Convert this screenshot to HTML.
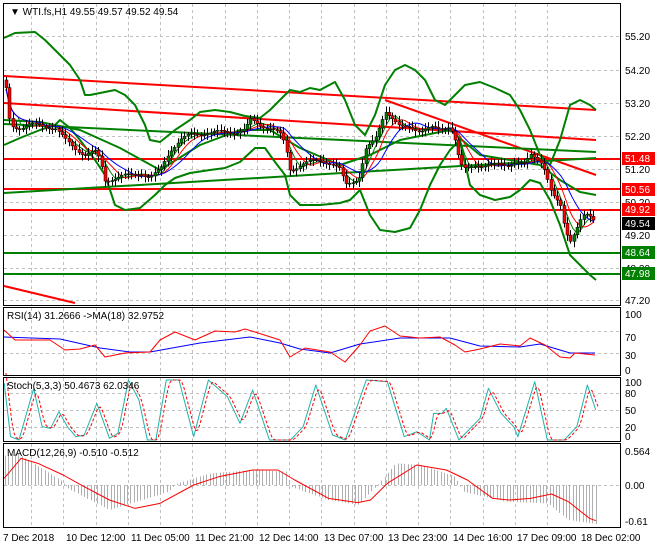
<!DOCTYPE html>
<html><head><meta charset="utf-8"><style>
html,body{margin:0;padding:0;background:#fff;}
svg{display:block;font-family:"Liberation Sans",Tahoma,sans-serif;}
</style></head><body>
<svg id="s" width="660" height="550" xmlns="http://www.w3.org/2000/svg">
<rect width="660" height="550" fill="#fff"/>
<g id="grid" stroke="#c0c0c0" stroke-dasharray="3,3" stroke-width="1"></g>
<g id="draw"></g>
<g stroke="#000" fill="none" stroke-width="1">
<rect x="3.5" y="3.5" width="617" height="302"/>
<rect x="3.5" y="307.5" width="617" height="68"/>
<rect x="3.5" y="377.5" width="617" height="64"/>
<rect x="3.5" y="443.5" width="617" height="84"/>
</g>
<g font-size="10" fill="#000">
<text x="625" y="40">55.20</text><text x="625" y="74">54.20</text><text x="625" y="107">53.20</text>
<text x="625" y="140">52.20</text><text x="625" y="173">51.20</text><text x="625" y="206">50.20</text>
<text x="625" y="239">49.20</text><text x="625" y="272">48.20</text><text x="625" y="304">47.20</text>
<text x="625" y="318">100</text><text x="625" y="341">70</text><text x="625" y="359">30</text><text x="625" y="374">0</text>
<text x="625" y="386">100</text><text x="625" y="397">80</text><text x="625" y="414">50</text><text x="625" y="431">20</text><text x="625" y="440">0</text>
<text x="625" y="455">0.564</text><text x="625" y="489">0.00</text><text x="625" y="525">-0.61</text>
</g>
<g font-size="10">
<rect x="622" y="152" width="33" height="13" fill="#f00"/><text x="625" y="162" fill="#fff">51.48</text>
<rect x="622" y="183" width="33" height="13" fill="#f00"/><text x="625" y="193" fill="#fff">50.56</text>
<rect x="622" y="203" width="33" height="13" fill="#f00"/><text x="625" y="213" fill="#fff">49.92</text>
<rect x="622" y="217" width="33" height="13" fill="#000"/><text x="625" y="227" fill="#fff">49.54</text>
<rect x="622" y="246" width="33" height="13" fill="#008000"/><text x="625" y="256" fill="#fff">48.64</text>
<rect x="622" y="267" width="33" height="13" fill="#008000"/><text x="625" y="277" fill="#fff">47.98</text>
</g>
<g font-size="10" fill="#000">
<text x="10" y="15">▼  WTI.fs,H1  49.55 49.57 49.52 49.54</text>
<text x="7" y="319">RSI(14) 31.2666  -&gt;MA(18) 32.9752</text>
<text x="7" y="389">Stoch(5,3,3) 50.4673 62.0346</text>
<text x="7" y="456">MACD(12,26,9) -0.510 -0.512</text>
<text x="3" y="541">7 Dec 2018</text><text x="66" y="541">10 Dec 12:00</text><text x="131" y="541">11 Dec 05:00</text>
<text x="195" y="541">11 Dec 21:00</text><text x="259" y="541">12 Dec 14:00</text><text x="324" y="541">13 Dec 07:00</text>
<text x="388" y="541">13 Dec 23:00</text><text x="453" y="541">14 Dec 16:00</text><text x="517" y="541">17 Dec 09:00</text>
<text x="581" y="541">18 Dec 02:00</text>
</g>
</svg>
<script>
var NS="http://www.w3.org/2000/svg";
function el(p,t,a){var e=document.createElementNS(NS,t);for(var k in a)e.setAttribute(k,a[k]);p.appendChild(e);return e;}
var G=document.getElementById('grid'),D=document.getElementById('draw');
var panels=[[4,305],[308,375],[378,441],[444,527]];
for(var x=547;x>4;x-=32.25){panels.forEach(function(p){el(G,'line',{x1:Math.round(x)+.5,x2:Math.round(x)+.5,y1:p[0],y2:p[1]});});}
[36,70,103,136,169,202,235,268,300,331,353,393,410,427,485].forEach(function(y){el(G,'line',{x1:4,x2:620,y1:y+.5,y2:y+.5});});
function interp(P,x){for(var i=1;i<P.length;i++){if(x<=P[i][0]){var a=P[i-1],b=P[i];return a[1]+(b[1]-a[1])*(x-a[0])/(b[0]-a[0]);}}return P[P.length-1][1];}
function pl(P,c,w,extra){var a={points:P.map(function(p){return p[0]+','+p[1]}).join(' '),fill:'none',stroke:c,'stroke-width':w,'stroke-linejoin':'round'};for(var k in extra)a[k]=extra[k];el(D,'polyline',a);}
function sc(P,sx){return P.map(function(p){return [p[0]/sx,300+p[1]/3];});}
// horizontal levels
[[159,'#f00'],[189,'#f00'],[210,'#f00']].forEach(function(l){el(D,'line',{x1:4,x2:620,y1:l[0],y2:l[0],stroke:l[1],'stroke-width':2});});
[[253,'#008000'],[274,'#008000']].forEach(function(l){el(D,'line',{x1:4,x2:620,y1:l[0],y2:l[0],stroke:l[1],'stroke-width':2});});
// trend lines
pl([[4,76],[596,110]],'#f00',2);pl([[4,103],[596,140]],'#f00',2);pl([[385,100],[596,175]],'#f00',2);pl([[4,286],[75,303]],'#f00',2);
pl([[4,124],[596,152]],'#008000',2);pl([[4,193],[596,158]],'#008000',2);
// bollinger
var up=[[4,38],[15,33],[35,32],[45,40],[60,55],[70,65],[80,80],[85,95],[90,95],[105,92],[115,90],[125,95],[135,105],[145,125],[150,140],[160,142],[175,130],[190,120],[200,112],[215,110],[230,112],[245,116],[260,118],[270,110],[280,100],[290,90],[300,92],[310,88],[320,90],[335,82],[345,100],[355,125],[365,135],[375,115],[385,85],[395,70],[405,65],[415,70],[425,80],[435,100],[445,105],[455,95],[465,85],[480,82],[495,88],[510,95],[520,110],[530,130],[540,155],[550,165],[560,140],[570,105],[580,100],[590,105],[596,110]];
var lo=[[4,145],[20,138],[40,130],[55,125],[60,120],[70,128],[80,140],[95,160],[105,175],[115,205],[125,210],[140,208],[155,195],[165,185],[175,178],[190,173],[210,170],[225,168],[240,162],[255,148],[265,148],[275,162],[285,175],[290,195],[300,205],[320,205],[340,203],[350,200],[360,190],[370,215],[380,230],[395,232],[410,228],[420,210],[430,185],[440,165],[450,150],[460,140],[470,185],[480,195],[495,200],[510,197],[520,190],[530,180],[540,183],[550,200],[560,225],[570,255],[580,265],[590,275],[596,280]];
var mid=[[4,120],[40,122],[80,130],[120,148],[160,170],[200,145],[240,130],[270,130],[300,148],[340,165],[370,155],[400,140],[450,130],[480,155],[510,160],[540,165],[560,180],[580,192],[596,195]];
pl(up,'#008000',2);pl(lo,'#008000',2);pl(mid,'#008000',2);
var cl=[[5,80],[10,125],[20,128],[30,125],[40,125],[55,128],[65,140],[75,148],[85,155],[95,152],[100,160],[105,180],[115,178],[125,176],[140,173],[150,178],[160,170],[170,150],[180,140],[190,135],[200,133],[210,133],[220,132],[235,132],[245,130],[250,120],[260,125],[270,128],[280,135],[285,145],[290,170],[300,165],[310,162],[320,160],[330,163],[340,170],[345,185],[355,180],[360,175],[365,150],[375,140],[385,110],[390,115],[400,128],[410,128],[420,130],[430,128],[440,130],[450,125],[455,140],[460,165],[465,170],[475,165],[485,165],[495,165],[505,165],[515,162],[525,165],[530,155],[540,160],[545,170],[550,190],[555,200],[560,205],[565,230],[570,240],[575,230],[580,220],[585,215],[590,218],[595,222]];
// moving averages
function ma(n,off){var r=[];for(var x=6;x<=596;x+=3){var s=0,c=0;for(var k=0;k<n;k++){var xx=x-k*3;if(xx<5)break;s+=interp(cl,xx);c++;}r.push([x,s/c+off]);}return r;}
pl(ma(5,0),'#008000',1);pl(ma(8,0),'#f00',1);pl(ma(13,0),'#00f',1);
// candles
var prev=interp(cl,5);
for(var x=6;x<=596;x+=3.3){var c=interp(cl,x)+(Math.sin(x*1.7)*2);var o=prev;prev=c;var hi=Math.min(o,c)-2-Math.abs(Math.sin(x*3.1))*4,lw=Math.max(o,c)+2+Math.abs(Math.cos(x*2.3))*4;
el(D,'line',{x1:Math.round(x)+.5,x2:Math.round(x)+.5,y1:hi,y2:lw,stroke:'#000','stroke-width':1});
var bull=c<o;el(D,'rect',{x:Math.round(x)-1,y:Math.min(o,c),width:3,height:Math.max(1,Math.abs(o-c)),fill:bull?'#008000':'#f00',stroke:'#000','stroke-width':0.5});}
// RSI
pl([[4,337],[60,339],[100,348],[130,352],[150,352],[200,343],[250,337],[280,343],[300,349],[330,353],[360,344],[400,338],[450,338],[480,346],[520,347],[540,344],[570,353],[595,353]],'#00f',1);
pl([[4,330],[15,340],[30,340],[50,340],[65,350],[80,349],[95,345],[105,357],[125,353],[150,352],[160,340],[175,332],[195,340],[215,331],[235,332],[245,329],[255,332],[280,340],[290,357],[305,348],[330,352],[345,362],[360,345],[370,331],[385,326],[400,336],[420,338],[440,337],[455,345],[465,352],[480,349],[500,344],[520,346],[530,338],[545,345],[560,357],[570,358],[575,353],[595,355]],'#f00',1);
// Stoch
var st=[[10,250],[25,410],[45,420],[80,265],[100,380],[120,385],[140,335],[160,380],[180,410],[200,405],[230,310],[260,415],[280,400],[305,240],[330,300],[350,420],[370,420],[395,240],[425,240],[460,410],[495,240],[540,290],[570,370],[600,270],[640,420],[690,420],[720,380],[750,255],[790,405],[820,420],[870,240],[920,245],[960,410],[990,395],[1020,420],[1030,340],[1050,340],[1060,325],[1090,420],[1140,355],[1160,265],[1190,340],[1220,380],[1230,410],[1270,245],[1300,420],[1340,420],[1370,380],[1395,255],[1415,330]];
var s1=sc(st,2.375);pl(s1,'#20b2aa',1);
var s2=[];for(var x=6;x<=598;x+=2){s2.push([x,(interp(s1,x-5)+interp(s1,x-3)+interp(s1,x-1))/3]);}
pl(s2,'#f00',1,{'stroke-dasharray':'3,2'});
// MACD histogram & signal
var sig=sc([[10,535],[50,475],[90,490],[150,525],[200,560],[260,600],[320,625],[380,610],[460,555],[520,530],[600,510],[660,510],[700,540],[780,595],[850,608],[880,600],[920,550],[990,495],[1060,510],[1110,540],[1170,595],[1210,600],[1260,595],[1310,582],[1350,605],[1400,655],[1415,662]],2.375);
var hist=sc([[0,470],[40,460],[150,545],[160,565],[260,630],[400,575],[420,550],[500,520],[600,510],[680,515],[690,560],[780,600],[850,615],[900,550],[940,490],[1000,495],[1080,530],[1100,575],[1200,605],[1300,610],[1350,660],[1415,672]],2.375);
for(var x=5;x<=596;x+=3.3){var y=interp(hist,x);el(D,'line',{x1:Math.round(x)+.5,x2:Math.round(x)+.5,y1:485,y2:y,stroke:'#b0b0b0','stroke-width':1});}
pl(sig,'#f00',1);
</script>
</body></html>
